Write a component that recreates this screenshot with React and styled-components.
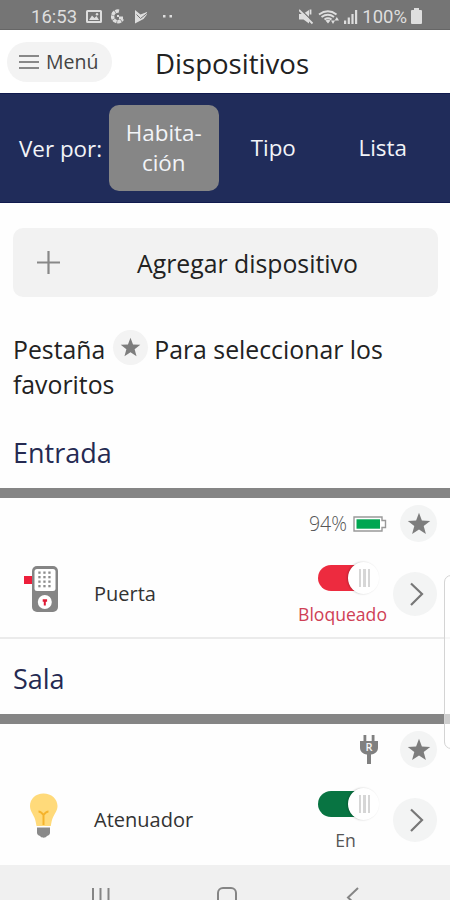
import React, { useState } from 'react';
import styled, { createGlobalStyle } from 'styled-components';

const GlobalStyle = createGlobalStyle`
  * {
    box-sizing: border-box;
  }

  body {
    margin: 0;
    background: #fff;
    font-family: 'Open Sans', 'Noto Sans', sans-serif;
    color: #222;
  }

  button {
    border: none;
    padding: 0;
    font: inherit;
    color: inherit;
    cursor: pointer;
  }
`;

const Screen = styled.div`
  position: relative;
  display: flex;
  flex-direction: column;
  width: 450px;
  height: 900px;
  overflow: hidden;
  background: #fefefe;
`;

const StatusBar = styled.div`
  display: flex;
  justify-content: space-between;
  align-items: center;
  flex-shrink: 0;
  height: 30px;
  padding: 4px 28px 0 31px;
  background: #757575;
  border-bottom: 1px solid #666;
  color: #dedede;
  font-family: Roboto, sans-serif;
  font-size: 18.5px;
`;

const StatusGroup = styled.div`
  display: flex;
  align-items: center;
  gap: ${(props) => props.$gap}px;
`;

const Header = styled.div`
  display: flex;
  align-items: center;
  flex-shrink: 0;
  height: 63px;
  padding-left: 7px;
  background: #fff;
`;

const MenuButton = styled.button`
  display: flex;
  align-items: center;
  gap: 7px;
  width: 105px;
  height: 40px;
  padding-left: 12px;
  border-radius: 20px;
  background: #f3f3f3;
  color: #444;
  font-size: 19.5px;
`;

const Title = styled.h1`
  margin: 2px 0 0 43px;
  font-size: 27.6px;
  font-weight: 400;
  color: #222;
`;

const FilterBar = styled.div`
  display: flex;
  align-items: center;
  flex-shrink: 0;
  height: 110px;
  padding-left: 19px;
  background: #202c5a;
  border-top: 1px solid #101a4e;
  border-bottom: 1px solid #101a4e;
  color: #f2f4f8;
  font-size: 22.4px;
`;

const FilterLabel = styled.div`
  width: 90px;
  white-space: nowrap;
`;

const FilterTab = styled.button`
  width: 109.5px;
  height: 86px;
  border-radius: 10px;
  background: ${(props) => (props.$active ? '#868686' : 'transparent')};
  color: #f2f4f8;
  line-height: 30px;
`;

const AddButton = styled.button`
  display: flex;
  align-items: center;
  flex-shrink: 0;
  width: 425px;
  height: 69px;
  margin: 25px 0 0 13px;
  padding-left: 24px;
  border-radius: 10px;
  background: #f2f2f2;
  color: #222;
  font-size: 24.8px;
`;

const AddText = styled.span`
  margin-left: 77px;
`;

const Hint = styled.div`
  flex-shrink: 0;
  height: 70px;
  margin: 35px 13px 0;
  font-size: 24.8px;
  line-height: 35px;
`;

const HintLine = styled.div`
  display: flex;
  align-items: center;
  height: 35px;
`;

const HintStar = styled.span`
  display: flex;
  align-items: center;
  justify-content: center;
  width: 35px;
  height: 35px;
  margin: -4px 6px 0 8px;
  border-radius: 50%;
  background: #f3f3f3;
`;

const RoomTitle = styled.h2`
  display: flex;
  align-items: flex-end;
  flex-shrink: 0;
  height: ${(props) => props.$height}px;
  margin: 0;
  padding: 0 0 18px 13px;
  border-bottom: 10px solid #858585;
  font-size: 27px;
  line-height: 35px;
  font-weight: 400;
  color: #252a52;
`;

const Device = styled.div`
  flex-shrink: 0;
  height: 141px;
  border-bottom: ${(props) => (props.$last ? 'none' : '2px solid #ebebeb')};
`;

const DeviceMeta = styled.div`
  display: flex;
  align-items: center;
  justify-content: flex-end;
  height: 51px;
  padding-right: 13px;
`;

const Percent = styled.span`
  margin-right: 6px;
  font-size: 19.5px;
  font-weight: 300;
  color: #555;
`;

const MetaIcon = styled.span`
  display: flex;
  margin-right: ${(props) => props.$right}px;
`;

const RoundButton = styled.button`
  display: flex;
  align-items: center;
  justify-content: center;
  width: ${(props) => props.$size}px;
  height: ${(props) => props.$size}px;
  border-radius: 50%;
  background: #f3f4f4;
`;

const DeviceMain = styled.div`
  display: grid;
  grid-template-columns: 94px 198px 101px 44px;
  align-items: center;
  height: 89px;
`;

const DeviceIcon = styled.div`
  display: flex;
  padding-left: 22px;
  margin-top: -9px;
`;

const DeviceName = styled.div`
  font-size: 20px;
  color: #333;
`;

const Control = styled.div`
  display: flex;
  flex-direction: column;
  align-items: center;
  padding-top: 5px;
`;

const Switch = styled.button`
  display: flex;
  align-items: center;
  justify-content: flex-end;
  width: 58px;
  height: 26px;
  margin-left: 9px;
  border-radius: 13px;
  background: linear-gradient(to right, ${(props) => props.$color} 38px, transparent 38px);
`;

const Knob = styled.span`
  display: flex;
  align-items: center;
  justify-content: center;
  gap: 2px;
  flex-shrink: 0;
  width: 31px;
  height: 32px;
  padding-left: 2px;
  margin-right: -3px;
  border-radius: 50%;
  background: #fff;
  box-shadow: -1px 0 2px rgba(0, 0, 0, 0.22);
`;

const Grip = styled.span`
  width: 2.5px;
  height: 18px;
  background: #d6d6d6;
`;

const State = styled.div`
  margin-top: 10px;
  padding-left: ${(props) => props.$shift || 0}px;
  font-size: 17.6px;
  line-height: 26px;
  color: ${(props) => props.$color};
`;

const NavBar = styled.div`
  display: flex;
  flex: 1;
  justify-content: space-between;
  min-height: 0;
  padding: 22px 91px 0 91px;
  background: #f0f0f0;
`;

// edge panel handle of the phone, floats over the list
const EdgeHandle = styled.div`
  position: absolute;
  top: 575px;
  right: -8px;
  width: 14px;
  height: 174px;
  border: 1.5px solid #d4d4d4;
  border-radius: 7px;
  background: rgba(255, 255, 255, 0.6);
`;

const StarIcon = ({ size }) => (
  <svg width={size} height={size} viewBox="0 0 24 24">
    <path
      fill="#7d7d7d"
      d="M12 .8l2.9 7.7 8.3.4-6.5 5.1 2.2 8-6.9-4.5L5.1 22l2.2-8L.8 8.9l8.3-.4z"
    />
  </svg>
);

const ChevronIcon = () => (
  <svg width="20" height="26" viewBox="0 0 20 26" fill="none" stroke="#777" strokeWidth="2.2">
    <path d="M6 2.5L17 13 6 24" />
  </svg>
);

const LockIcon = () => (
  <svg width="38" height="48" viewBox="0 0 38 48">
    <rect x="2" y="11" width="9" height="8" fill="#ed1f3b" />
    <rect x="10" y="1" width="26" height="46" rx="5" fill="#858585" />
    <rect x="12.5" y="4" width="21" height="22" rx="2.5" fill="#fff" />
    {[17.5, 22.5, 27.5].map((x) =>
      [6.5, 11, 15.5, 20].map((y) => (
        <rect key={`${x}-${y}`} x={x - 1.2} y={y} width="2.3" height="2.3" fill="#8d8d8d" />
      ))
    )}
    <circle cx="22.8" cy="37" r="7" fill="#fff" />
    <path d="M20.7 34.3h4.4v2.4h-1.3v3.8h-2v-3.8h-1.1z" fill="#df1b35" />
  </svg>
);

const BulbIcon = () => (
  <svg width="44" height="48" viewBox="0 0 44 48">
    <path
      d="M21.5 2.5c7.8 0 14 5.4 14 12.6 0 4.5-2.8 7.5-4.7 11.7-1.2 2.7-1.4 5.4-2 8.2H14.5c-.6-2.8-.9-5.5-2-8.2C10.6 22.6 8 19.6 8 15.1 8 7.9 13.7 2.5 21.5 2.5z"
      fill="#ffda7a"
    />
    <path
      d="M16.5 20.5c2 0 3.5 1.5 5 3.5 1.5-2 3-3.5 5-3.5M21.5 24v10"
      fill="none"
      stroke="#f5b32c"
      strokeWidth="2"
    />
    <path
      d="M15 36.5h13V42c0 2-2.5 2.500-3.500 3.500-1.500 1.600-4.500 1.600-6 0-1-1-3.500-1.500-3.500-3.500z"
      fill="#8a8a8a"
    />
  </svg>
);

const DeviceBattery = () => (
  <svg width="34" height="16" viewBox="0 0 34 16">
    <path d="M1 1h28v3.500h3.500v7H29V15H1z" fill="#fff" stroke="#999" strokeWidth="1.4" />
    <rect x="3.5" y="3.3" width="23.5" height="9.4" fill="#00a651" />
  </svg>
);

const PlugText = styled.text`
  font-family: 'Open Sans', sans-serif;
  font-size: 11px;
  font-weight: 600;
  fill: #f5f5f5;
`;

const PlugIcon = () => (
  <svg width="20" height="30" viewBox="0 0 20 30">
    <path
      d="M4.5 0h2.800v6h5.400V0h2.800v6H19v6.500c0 4-2.500 6.500-7 7V29H8v-9.500c-4.500-.5-7-3-7-7V6h3.500z"
      fill="#808080"
    />
    <PlugText x="10" y="16" textAnchor="middle">R</PlugText>
  </svg>
);

const MenuIcon = () => (
  <svg width="20" height="16" viewBox="0 0 20 16" stroke="#666" strokeWidth="1.5">
    <path d="M0 2h20M0 8h20M0 14h20" />
  </svg>
);

const PlusIcon = () => (
  <svg width="23" height="23" viewBox="0 0 23 23" stroke="#888" strokeWidth="2.2">
    <path d="M0 11.5h23M11.5 0v23" />
  </svg>
);

const StatusIconsLeft = () => (
  <svg width="90" height="18" viewBox="0 0 90 18" fill="#dedede">
    <path
      fillRule="evenodd"
      d="M1.5 2h13Q16 2 16 3.5v10Q16 15 14.5 15h-13Q0 15 0 13.5v-10Q0 2 1.500 2zM2 4v9h12V4z"
    />
    <path d="M3 12l3-4.500 2.500 2.500 2-2 2.500 4z" />
    <circle cx="11" cy="6.300" r="1.200" />
    <path
      d="M33 3.200A5.300 5.300 0 1 0 36.500 11"
      fill="none"
      stroke="#dedede"
      strokeWidth="3.400"
      strokeDasharray="3.600 .6"
    />
    <path d="M33 8.500h4v2.500h-4zM31 7h2v2h-2z" />
    <path d="M49 2l5.500 4.500L61 4v2.500L57.500 11 49 15.500z" />
    <path d="M50.500 6.500l4 4L61.500 5" fill="none" stroke="#757575" strokeWidth="1" />
    <rect x="77" y="7" width="2.500" height="2.500" />
    <rect x="83.500" y="7" width="2.500" height="2.500" />
  </svg>
);

const StatusIconsRight = () => (
  <svg width="59" height="18" viewBox="0 0 59 18" fill="#dedede">
    <path d="M0 6h4l6-4v13.500L4.500 11.500H0z" />
    <path d="M1.500 1.500l13 12.500" stroke="#757575" strokeWidth="1.200" />
    <path d="M0 2l13.500 13.500M11.500 1.500v5" stroke="#dedede" strokeWidth="1.800" />
    <path
      d="M20 6.500q9-6.500 17.500 0M22.500 9q6.500-4.500 12.500 0M25.500 11.500q3.500-2.500 7 0"
      fill="none"
      stroke="#dedede"
      strokeWidth="2"
    />
    <path d="M29 15.500l-2.500-3q2.500-1.500 5 0zM34 16l-2-3.500h4zM37.800 9l2.200 3.500h-4.400z" />
    <path d="M45 12.500h2.200V16H45zM48.700 9.500h2.200V16h-2.200zM52.400 6h2.200v10h-2.200zM56 2h2.200v14H56z" />
  </svg>
);

const StatusBattery = () => (
  <svg width="11" height="17" viewBox="0 0 11 17" fill="#dedede">
    <path d="M3 0h5v2h2q1 0 1 1v12q0 1-1 1H1q-1 0-1-1V3q0-1 1-1h2z" />
  </svg>
);

const RecentsIcon = () => (
  <svg width="20" height="20" viewBox="0 0 20 20" stroke="#858585" strokeWidth="2">
    <path d="M2 1v19M9.5 1v19M17.500 1v19" />
  </svg>
);

const HomeIcon = () => (
  <svg width="26" height="22" viewBox="0 0 26 22" fill="none" stroke="#858585" strokeWidth="2">
    <rect x="2" y="1" width="18" height="19" rx="5" />
  </svg>
);

const BackIcon = () => (
  <svg width="13" height="22" viewBox="0 0 13 22" fill="none" stroke="#858585" strokeWidth="2">
    <path d="M12 1L2 10.5 12 20" />
  </svg>
);

const DeviceRow = ({ icon, name, meta, color, state, stateColor, shift, last }) => (
  <Device $last={last}>
    <DeviceMeta>
      {meta}
      <RoundButton $size={37}>
        <StarIcon size={24} />
      </RoundButton>
    </DeviceMeta>
    <DeviceMain>
      <DeviceIcon>{icon}</DeviceIcon>
      <DeviceName>{name}</DeviceName>
      <Control>
        <Switch $color={color}>
          <Knob>
            <Grip />
            <Grip />
            <Grip />
          </Knob>
        </Switch>
        <State $color={stateColor} $shift={shift}>{state}</State>
      </Control>
      <RoundButton $size={44}>
        <ChevronIcon />
      </RoundButton>
    </DeviceMain>
  </Device>
);

const tabs = ['Habitación', 'Tipo', 'Lista'];

const App = () => {
  const [activeTab, setActiveTab] = useState('Habitación');

  return (
    <Screen>
      <GlobalStyle />
      <StatusBar>
        <StatusGroup $gap={9}>
          <span>16:53</span>
          <StatusIconsLeft />
        </StatusGroup>
        <StatusGroup $gap={4}>
          <StatusIconsRight />
          <span>100%</span>
          <StatusBattery />
        </StatusGroup>
      </StatusBar>

      <Header>
        <MenuButton>
          <MenuIcon />
          Menú
        </MenuButton>
        <Title>Dispositivos</Title>
      </Header>

      <FilterBar>
        <FilterLabel>Ver por:</FilterLabel>
        {tabs.map((tab) => (
          <FilterTab key={tab} $active={tab === activeTab} onClick={() => setActiveTab(tab)}>
            {tab === 'Habitación' ? <>Habita-<br />ción</> : tab}
          </FilterTab>
        ))}
      </FilterBar>

      <AddButton>
        <PlusIcon />
        <AddText>Agregar dispositivo</AddText>
      </AddButton>

      <Hint>
        <HintLine>
          <span>Pestaña</span>
          <HintStar>
            <StarIcon size={21} />
          </HintStar>
          <span>Para seleccionar los</span>
        </HintLine>
        <HintLine>favoritos</HintLine>
      </Hint>

      <RoomTitle $height={96}>Entrada</RoomTitle>
      <DeviceRow
        icon={<LockIcon />}
        name="Puerta"
        meta={
          <>
            <Percent>94%</Percent>
            <MetaIcon $right={13}>
              <DeviceBattery />
            </MetaIcon>
          </>
        }
        color="#ed2b3f"
        state="Bloqueado"
        stateColor="#cf3f55"
      />

      <RoomTitle $height={85}>Sala</RoomTitle>
      <DeviceRow
        icon={<BulbIcon />}
        name="Atenuador"
        meta={
          <MetaIcon $right={21}>
            <PlugIcon />
          </MetaIcon>
        }
        color="#087442"
        state="En"
        stateColor="#555"
        shift={6}
        last
      />

      <NavBar>
        <RecentsIcon />
        <HomeIcon />
        <BackIcon />
      </NavBar>

      <EdgeHandle />
    </Screen>
  );
};

export default App;
